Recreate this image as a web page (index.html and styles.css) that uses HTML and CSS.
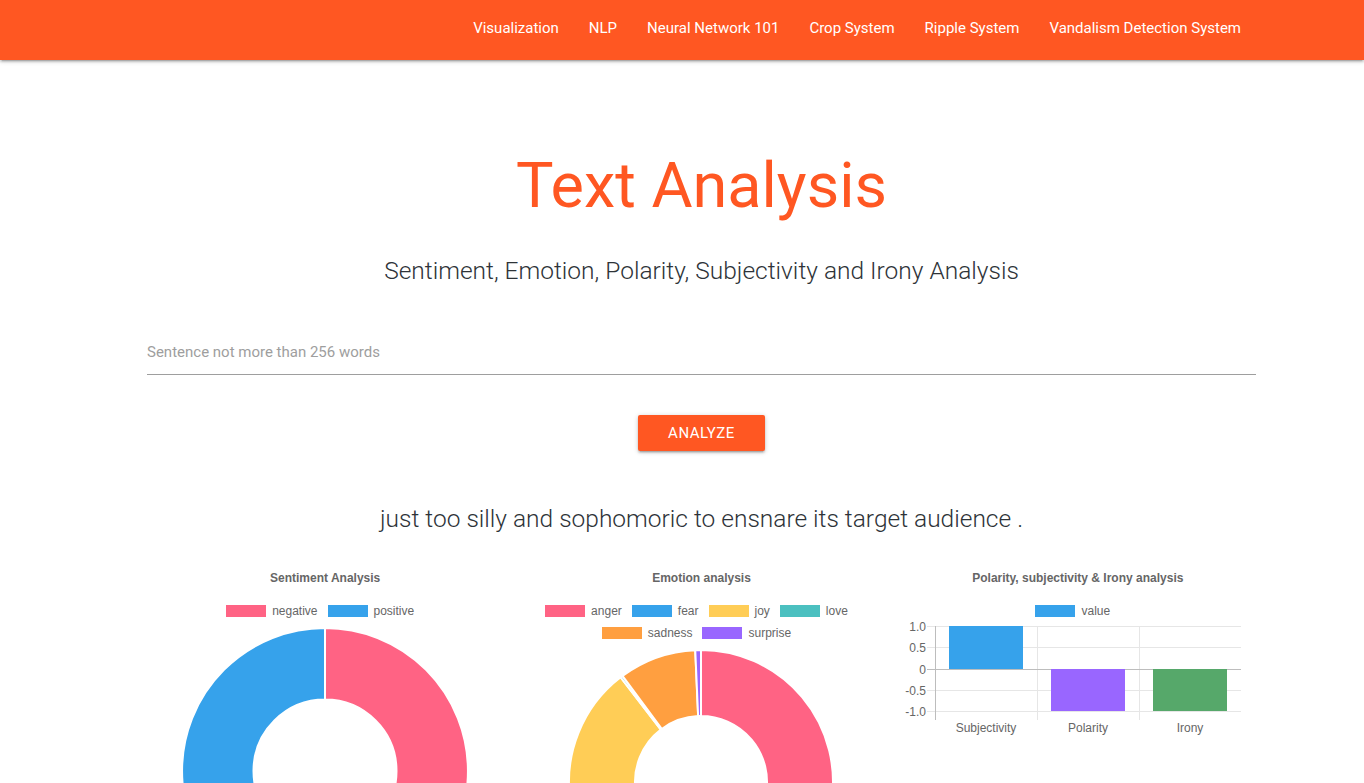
FILE: index.html
```html
<!DOCTYPE html>
<html lang="en">
<head>
<meta charset="utf-8">
<title>Text Analysis</title>
<link rel="stylesheet" href="styles.css">
</head>
<body>
<header class="navbar">
  <div class="container nav-inner">
    <ul class="nav-links">
      <li><a href="#">Visualization</a></li>
      <li><a href="#">NLP</a></li>
      <li><a href="#">Neural Network 101</a></li>
      <li><a href="#">Crop System</a></li>
      <li><a href="#">Ripple System</a></li>
      <li><a href="#">Vandalism Detection System</a></li>
    </ul>
  </div>
</header>

<main class="container">
  <h1 class="title">Text Analysis</h1>
  <h5 class="subtitle">Sentiment, Emotion, Polarity, Subjectivity and Irony Analysis</h5>

  <input class="sentence-input" type="text" placeholder="Sentence not more than 256 words">

  <div class="btn-row">
    <button class="btn">Analyze</button>
  </div>

  <h5 class="result">just too silly and sophomoric to ensnare its target audience .</h5>

  <section class="charts">
    <div class="chart-col">
      <div class="chart-title">Sentiment Analysis</div>
      <div class="legend">
        <div class="legend-item"><span class="swatch c-red"></span>negative</div>
        <div class="legend-item"><span class="swatch c-blue"></span>positive</div>
      </div>
      <svg class="chart-svg donut1" width="376" height="162" viewBox="0 0 376 162">
        <path class="seg" fill="#ff6384" d="M188 7 A143 143 0 0 1 188 293 L188 221.5 A71.5 71.5 0 0 0 188 78.5 Z"/>
        <path class="seg" fill="#36a2eb" d="M188 293 A143 143 0 0 1 188 7 L188 78.5 A71.5 71.5 0 0 0 188 221.5 Z"/>
      </svg>
    </div>

    <div class="chart-col">
      <div class="chart-title">Emotion analysis</div>
      <div class="legend">
        <div class="legend-item"><span class="swatch c-red"></span>anger</div>
        <div class="legend-item"><span class="swatch c-blue"></span>fear</div>
        <div class="legend-item"><span class="swatch c-yellow"></span>joy</div>
        <div class="legend-item"><span class="swatch c-teal"></span>love</div>
        <div class="legend-item"><span class="swatch c-orange"></span>sadness</div>
        <div class="legend-item"><span class="swatch c-purple"></span>surprise</div>
      </div>
      <svg class="chart-svg donut2" width="376" height="140" viewBox="0 0 376 140">
        <path class="seg" fill="#ff6384" d="M188 7 A132 132 0 1 1 142.85 263.04 L165.43 201.02 A66 66 0 1 0 188 73 Z"/>
        <path class="seg" fill="#ffcd56" d="M142.85 263.04 A132 132 0 0 1 107.64 34.27 L147.82 86.64 A66 66 0 0 0 165.43 201.02 Z"/>
        <path class="seg" fill="#4bc0c0" d="M107.64 34.27 A132 132 0 0 1 109.49 32.89 L148.74 85.94 A66 66 0 0 0 147.82 86.64 Z"/>
        <path class="seg" fill="#ff9f40" d="M109.49 32.89 A132 132 0 0 1 182.24 7.13 L185.12 73.06 A66 66 0 0 0 148.74 85.94 Z"/>
        <path class="seg" fill="#9966ff" d="M182.24 7.13 A132 132 0 0 1 188 7 L188 73 A66 66 0 0 0 185.12 73.06 Z"/>
      </svg>
    </div>

    <div class="chart-col">
      <div class="chart-title">Polarity, subjectivity &amp; Irony analysis</div>
      <div class="legend">
        <div class="legend-item"><span class="swatch c-blue"></span>value</div>
      </div>
      <svg class="chart-svg bars" width="376" height="120" viewBox="0 0 376 120">
        <g class="grid">
          <line x1="37" y1="5.5" x2="351" y2="5.5"/>
          <line x1="37" y1="26.5" x2="351" y2="26.5"/>
          <line x1="37" y1="69.5" x2="351" y2="69.5"/>
          <line x1="37" y1="90.5" x2="351" y2="90.5"/>
          <line x1="147.5" y1="5" x2="147.5" y2="99"/>
          <line x1="249.5" y1="5" x2="249.5" y2="99"/>
        </g>
        <g class="axis">
          <line x1="37" y1="48.5" x2="351" y2="48.5"/>
          <line x1="45.5" y1="5" x2="45.5" y2="99"/>
        </g>
        <rect x="59" y="5" width="74" height="43" fill="#36a2eb"/>
        <rect x="161" y="48" width="74" height="42" fill="#9966ff"/>
        <rect x="263" y="48" width="74" height="42" fill="#56a86a"/>
        <g class="tick-y">
          <text x="36" y="9.5">1.0</text>
          <text x="36" y="31">0.5</text>
          <text x="36" y="52.5">0</text>
          <text x="36" y="74">-0.5</text>
          <text x="36" y="95">-1.0</text>
        </g>
        <g class="tick-x">
          <text x="96" y="110.5">Subjectivity</text>
          <text x="198" y="110.5">Polarity</text>
          <text x="300" y="110.5">Irony</text>
        </g>
      </svg>
    </div>
  </section>
</main>
</body>
</html>
```

FILE: styles.css
```css
* { box-sizing: border-box; }

html, body {
  margin: 0;
  padding: 0;
  background: #fff;
  font-family: Roboto, "Liberation Sans", sans-serif;
}

.container {
  width: 1109px;
  margin-left: 147px;
}

/* header */
.navbar {
  height: 60px;
  background: #ff5722;
  box-shadow: 0 2px 2px 0 rgba(0,0,0,.14), 0 3px 1px -2px rgba(0,0,0,.12), 0 1px 5px 0 rgba(0,0,0,.2);
  position: relative;
  z-index: 2;
}

.nav-inner {
  display: flex;
  justify-content: flex-end;
}

.nav-links {
  display: flex;
  list-style: none;
  margin: 0;
  padding: 0;
}

.nav-links a {
  display: block;
  padding: 0 15px;
  line-height: 56px;
  font-size: 15px;
  color: #fff;
  text-decoration: none;
}

/* headings */
.title {
  margin: 95px 0 0;
  font-size: 63px;
  line-height: 62px;
  font-weight: 400;
  color: #ff5722;
  text-align: center;
}

.subtitle,
.result {
  margin: 0;
  font-size: 24.5px;
  line-height: 32px;
  font-weight: 300;
  color: #2e3338;
  text-align: center;
}

.subtitle { margin-top: 38px; }
.result { margin-top: 52px; }

/* input */
.sentence-input {
  display: block;
  width: 100%;
  height: 45px;
  margin-top: 43px;
  padding: 0;
  border: none;
  border-bottom: 1px solid #9e9e9e;
  outline: none;
  background: transparent;
  font-family: Roboto, "Liberation Sans", sans-serif;
  font-size: 15px;
  color: #333;
}

.sentence-input::placeholder {
  color: #9e9e9e;
}

/* button */
.btn-row {
  display: flex;
  justify-content: center;
  margin-top: 40px;
}

.btn {
  height: 36px;
  width: 127px;
  padding: 0;
  border: none;
  border-radius: 2px;
  background: #ff5722;
  color: #fff;
  font-family: Roboto, "Liberation Sans", sans-serif;
  font-size: 15px;
  letter-spacing: 0.5px;
  text-transform: uppercase;
  box-shadow: 0 2px 2px 0 rgba(0,0,0,.14), 0 3px 1px -2px rgba(0,0,0,.12), 0 1px 5px 0 rgba(0,0,0,.2);
  cursor: pointer;
}

/* charts */
.charts {
  display: grid;
  grid-template-columns: repeat(3, 1fr);
  margin: 35px -10px 0;
}

.chart-col {
  display: flex;
  flex-direction: column;
  align-items: center;
}

.chart-title {
  font-family: "Liberation Sans", Arial, sans-serif;
  font-size: 12px;
  line-height: 16px;
  font-weight: 700;
  color: #666;
}

.legend {
  display: flex;
  flex-wrap: wrap;
  justify-content: center;
  column-gap: 10px;
  width: 356px;
  margin-top: 14px;
  margin-bottom: -1px;
  padding-right: 10px;
}

.legend-item {
  display: flex;
  align-items: center;
  gap: 6px;
  height: 22px;
  font-family: "Liberation Sans", Arial, sans-serif;
  font-size: 12px;
  color: #666;
}

.swatch {
  display: block;
  width: 40px;
  height: 12px;
}

.c-red { background: #ff6384; }
.c-blue { background: #36a2eb; }
.c-yellow { background: #ffcd56; }
.c-teal { background: #4bc0c0; }
.c-orange { background: #ff9f40; }
.c-purple { background: #9966ff; }

.chart-svg {
  display: block;
  overflow: hidden;
}

.seg {
  stroke: #fff;
  stroke-width: 2;
}

.grid line {
  stroke: #e6e6e6;
  stroke-width: 1;
}

.axis line {
  stroke: #bdbdbd;
  stroke-width: 1;
}

.tick-y text,
.tick-x text {
  font-family: "Liberation Sans", Arial, sans-serif;
  font-size: 12px;
  fill: #666;
}

.tick-y text { text-anchor: end; }
.tick-x text { text-anchor: middle; }
```
